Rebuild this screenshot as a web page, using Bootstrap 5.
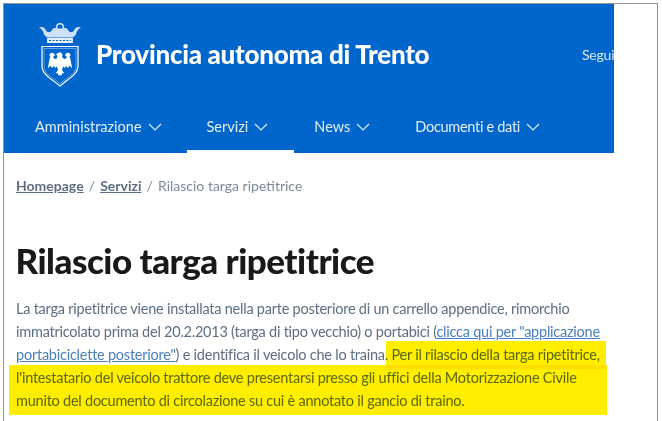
<!DOCTYPE html>
<html lang="it">
<head>
    <meta charset="UTF-8">
    <meta name="viewport" content="width=device-width, initial-scale=1.0">
    <title>Rilascio targa ripetitrice</title>
    <link href="https://cdn.jsdelivr.net/npm/bootstrap@5.3.0/dist/css/bootstrap.min.css" rel="stylesheet">
    <style>
        html, body { height: 421px; overflow: hidden; background: #fff; }
        body { font-family: Lato, "Liberation Sans", sans-serif; color: #5c6f82; }
        .frame { margin: 3px 0 0 3px; width: 655px; height: 418px; border: 1px solid #8f9296; border-bottom: 0; overflow: hidden; }
        .sheet { position: relative; width: 610px; height: 417px; overflow: hidden; }
        .pat-head { background: #0066cc; height: 149px; color: #fff; }
        .brand-row { height: 100px; padding: 2px 0 0 35px; }
        .brand-name { font-size: 26px; font-weight: 900; line-height: 1; margin: -2px 0 0 15px; width: 486px; letter-spacing: -.28px; white-space: nowrap; }
        .follow { font-size: 14px; white-space: nowrap; color: #d9e8f7; letter-spacing: -.2px; margin-top: -2px; }
        .pat-nav { height: 49px; }
        .pat-link { color: #e3eefa; font-size: 14.5px; text-decoration: none; height: 49px; display: flex; align-items: center; gap: 6px; padding-bottom: 4px; white-space: nowrap; }
        .pat-link.on { border-bottom: 3px solid #fff; padding: 0 26px 1px 20px; }
        .pat-link svg { width: 14px; height: 8px; }
        .nav-first { margin-left: 31px; }
        .nav-on { margin-left: 25px; }
        .nav-news { margin-left: 20px; }
        .nav-docs { margin-left: 45px; letter-spacing: -.3px; }
        .crumbs { font-size: 14px; margin: 24px 0 0 12px; height: 18px; line-height: 18px; color: #5c6f82; }
        .crumbs a { color: #5c6f82; font-weight: 700; }
        .crumbs span { color: #7b8a99; margin: 0 1.5px; }
        .page-title { font-size: 35px; font-weight: 900; color: #19191a; margin: 43px 0 0 11.5px; line-height: 44px; letter-spacing: -.5px; white-space: nowrap; }
        .intro { font-size: 14.5px; line-height: 23px; margin: 15px 0 0 12px; white-space: nowrap; letter-spacing: -.235px; }
        .intro a { color: #4a80bc; }
        .marker { position: absolute; background: #ffee00; mix-blend-mode: multiply; }
        .marker-a { left: 382px; top: 337px; width: 220px; height: 28px; }
        .marker-b { left: 5px; top: 361px; width: 598px; height: 50px; }
    </style>
</head>
<body>
<div class="frame">
    <div class="sheet">
        <header class="pat-head">
            <div class="brand-row d-flex align-items-center">
                <svg width="42" height="64" viewBox="0 0 42 64" class="flex-shrink-0">
                    <!-- corona -->
                    <circle cx="21" cy="4" r="3.4" fill="none" stroke="#cfe1f5" stroke-width="1.6"/>
                    <path d="M0 4.5c3-1.500 6 0 7 3 1.500 2 4 2.500 6-.5 1-2 3-2.500 4-1.500h8c1-1 3-.5 4 1.500 2 3 4.500 2.500 6 .5 1-3 4-4.500 7-3-3 1.500-4.500 4-5 7l-3 3H8l-3-3C4.500 8.500 3 6 0 4.500z" fill="#cfe1f5"/>
                    <rect x="8" y="15" width="26" height="5" rx="1" fill="#e6f0fa"/>
                    <path d="M10 17.500h22" stroke="#0066cc" stroke-width="1" stroke-dasharray="2 1.500"/>
                    <!-- scudo -->
                    <path d="M3 23.500h36v20c0 8-11 13-18 19.500C14 57 3 51.500 3 43.500z" fill="none" stroke="#fff" stroke-width="1.2"/>
                    <path d="M5 25.500h32v18c0 7-10 12-16 17-6-5-16-10-16-17z" fill="none" stroke="#9fc4ec" stroke-width=".6"/>
                    <!-- aquila -->
                    <path fill="#fff" d="M21 29l2.500 2-.5 3 2 2c2 0 3-1 2.500-3l-1.500-.5c.5-2 2-3 4-2.500 2 1 2 3 .5 3 1 3 2 8 2.500 12l-3-2.500-.5 2.500-2.500-2-1 2-2-1.500-1 3.500 2.500 3.500-2-.5-1.500 3-1-1.500-1 1.500-1.500-3-2 .5 2.500-3.500-1-3.500-2 1.500-1-2-2.500 2-.5-2.500-3 2.500c.5-4 1.500-9 2.500-12-1.500 0-1.500-2 .5-3 2-.5 3.500.5 4 2.500l-1.500.5c-.5 2 .5 3 2.500 3l1.500-2-.5-2-1.500-.5z"/>
                </svg>
                <div class="brand-name flex-shrink-0">Provincia autonoma di Trento</div>
                <div class="follow flex-shrink-0">Seguici su</div>
            </div>
            <nav class="pat-nav d-flex align-items-start">
                <a class="pat-link nav-first" href="#">Amministrazione
                    <svg viewBox="0 0 14 8" fill="none" stroke="#e3eefa" stroke-width="1.2"><path d="M1 1l6 6 6-6"/></svg></a>
                <a class="pat-link on nav-on" href="#">Servizi
                    <svg viewBox="0 0 14 8" fill="none" stroke="#e3eefa" stroke-width="1.2"><path d="M1 1l6 6 6-6"/></svg></a>
                <a class="pat-link nav-news" href="#">News
                    <svg viewBox="0 0 14 8" fill="none" stroke="#e3eefa" stroke-width="1.2"><path d="M1 1l6 6 6-6"/></svg></a>
                <a class="pat-link nav-docs" href="#">Documenti e dati
                    <svg viewBox="0 0 14 8" fill="none" stroke="#e3eefa" stroke-width="1.2"><path d="M1 1l6 6 6-6"/></svg></a>
            </nav>
        </header>
        <div class="crumbs"><a href="#">Homepage</a> <span>/</span> <a href="#">Servizi</a> <span>/</span> <span class="mx-0">Rilascio targa ripetitrice</span></div>
        <h1 class="page-title">Rilascio targa ripetitrice</h1>
        <p class="intro mb-0">La targa ripetitrice viene installata nella parte posteriore di un carrello appendice, rimorchio<br>
            immatricolato prima del 20.2.2013 (targa di tipo vecchio) o portabici (<a href="#">clicca qui per "applicazione</a><br>
            <a href="#">portabiciclette posteriore"</a>) e identifica il veicolo che lo traina. Per il rilascio della targa ripetitrice,<br>
            l'intestatario del veicolo trattore deve presentarsi presso gli uffici della Motorizzazione Civile<br>
            munito del documento di circolazione su cui è annotato il gancio di traino.</p>
        <div class="marker marker-a"></div>
        <div class="marker marker-b"></div>
    </div>
</div>
<script src="https://cdn.jsdelivr.net/npm/bootstrap@5.3.0/dist/js/bootstrap.bundle.min.js"></script>
</body>
</html>
